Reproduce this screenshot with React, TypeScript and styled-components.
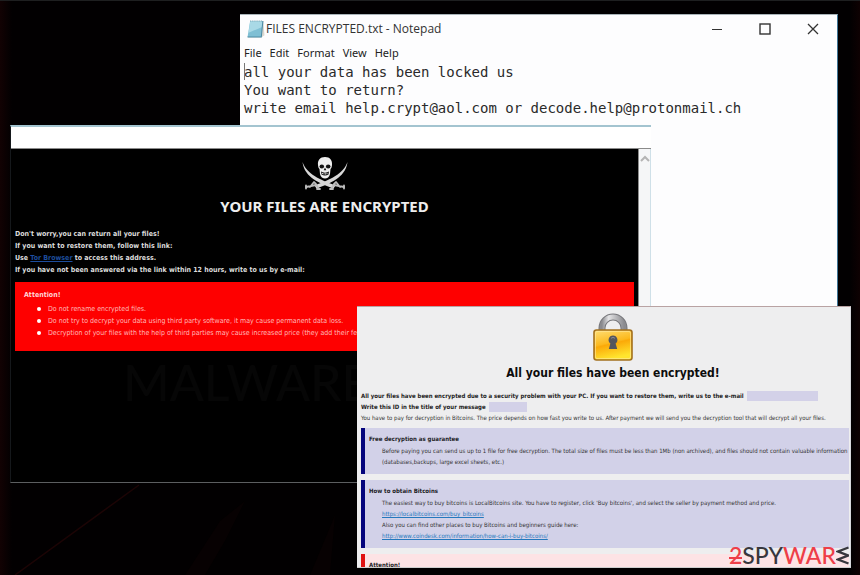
import React from "react";
import styled, { createGlobalStyle } from "styled-components";

const GlobalStyle = createGlobalStyle`
  *, *::before, *::after { box-sizing: border-box; }
  body { margin: 0; background: #020001; }
  h1, h2, h3, p, ul { margin: 0; padding: 0; }
  button { border: 0; padding: 0; background: none; font: inherit; color: inherit; }
`;

const sans = `"DejaVu Sans Condensed", "DejaVu Sans", sans-serif`;

const Desktop = styled.main`
  position: relative;
  min-height: 100vh;
  overflow: hidden;
  border-top: 1px solid #1e1f20;
  background:
    linear-gradient(90deg, #120203 0, transparent 12px),
    linear-gradient(270deg, #0e0102 0, transparent 10px),
    #020001;
`;

const Streaks = styled.svg`
  position: absolute;
  left: 0;
  bottom: 0;
  width: 340px;
  height: 92px;
`;

/* Notepad */

const NotepadWindow = styled.section`
  position: absolute;
  top: 13px;
  left: 240px;
  right: 22px;
  min-height: 300px;
  background: #fdfdfe;
  border-top: 1px solid #a9b4b9;
  border-right: 1px solid #3f7596;
  color: #222;
`;

const TitleBar = styled.header`
  display: flex;
  align-items: center;
  height: 27px;
  padding-left: 7px;
`;

const WindowTitle = styled.h1`
  flex: 1;
  margin-left: 1px;
  font: 400 12px/16px "Open Sans", sans-serif;
  color: #333;
`;

const ControlButton = styled.button`
  display: flex;
  justify-content: center;
  align-items: center;
  width: 48px;
  height: 27px;
`;

const MenuBar = styled.nav`
  display: flex;
  gap: 8px;
  margin-top: 3px;
  padding-left: 4px;
`;

const MenuButton = styled.button`
  font: 400 11px/16px "Noto Sans", sans-serif;
  color: #222;
`;

const NoteText = styled.div`
  margin: 2px 4px;
  font: 14px/18px "DejaVu Sans Mono", monospace;
  color: #2a2a2a;
`;

const Caret = styled.span`
  position: absolute;
  width: 1px;
  height: 17px;
  background: #777;
`;

/* Black ransom note */

const PirateWindow = styled.section`
  position: absolute;
  top: 124px;
  left: 10px;
  right: 209px;
  display: flex;
  flex-direction: column;
  min-height: 358px;
  background: #000;
  border-top: 2px solid #a3c4d0;
  border-left: 1px solid #15181b;
  border-bottom: 1px solid #5c5e60;
`;

const PirateBar = styled.div`
  height: 22px;
  background: #fff;
  border-bottom: 1px solid #8b8b8b;
`;

const PirateFrame = styled.div`
  display: flex;
  flex: 1;
`;

const PirateBody = styled.div`
  position: relative;
  flex: 1;
  padding: 8px 4px 0;
  color: #dcdcdc;
`;

const PirateHeader = styled.header`
  display: flex;
  flex-direction: column;
  align-items: center;
  gap: 5px;
`;

const PirateTitle = styled.h2`
  font: 700 15px/20px "Noto Sans", sans-serif;
  color: #eee;
`;

const PirateIntro = styled.div`
  margin-top: 12px;
  font: 700 7px/12px ${sans};

  a { color: #1d4d9c; }
`;

const RedNotice = styled.div`
  margin-top: 6px;
  padding: 7px 9px 12px;
  background: #fe0000;
  color: #ffb9b9;
  font: 7px/12px ${sans};

  h3 {
    font: inherit;
    font-weight: 700;
    color: #ffd6d6;
    margin-bottom: 2px;
  }
`;

const BulletList = styled.ul`
  list-style: none;

  li {
    display: flex;
    align-items: center;
    gap: 7px;
    padding-left: 13px;
    white-space: nowrap;
    overflow: hidden;
  }
  li::before {
    content: "";
    flex: none;
    width: 4px;
    height: 4px;
    border-radius: 50%;
    background: #fff;
  }
`;

const Watermark = styled.div`
  margin-top: 5px;
  padding-left: 108px;
  font: 500 50px/52px Lato, sans-serif;
  color: #060606;
`;

const ScrollTrack = styled.div`
  width: 13px;
  padding-top: 6px;
  background: #f5f6f7;
  border-left: 1px solid #8d8d8d;
  border-right: 1px solid #cfe0e8;
`;

const ScrollButton = styled.button`
  display: flex;
  justify-content: center;
  width: 100%;
`;

/* Padlock ransom note */

const LockWindow = styled.section`
  position: absolute;
  top: 305px;
  left: 357px;
  right: 9px;
  height: 262px;
  overflow: hidden;
  padding: 6px 1px 0 4px;
  background: #eeeeef;
  border-top: 1px solid #b9a3a3;
  border-right: 1px solid #d8d8dc;
  border-bottom: 1px solid #cfcfcf;
  color: #333;
  font: 6px/11px ${sans};
`;

const LockHeader = styled.header`
  display: flex;
  flex-direction: column;
  align-items: center;
  gap: 4px;
  padding-left: 16px;
`;

const LockTitle = styled.h2`
  font: 700 12px/16px ${sans};
  color: #0c0c0c;
`;

const LockIntro = styled.div`
  margin-top: 9px;
  white-space: nowrap;
`;

const Strong = styled.p`
  display: flex;
  align-items: center;
  gap: 3px;
  font-weight: 700;
  color: #222;
`;

const Redacted = styled.span<{ $width: number }>`
  width: ${(p) => p.$width}px;
  height: 10px;
  background: #d3d1e8;
`;

const Panel = styled.section<{ $tone: "info" | "alert" }>`
  margin: 5px 0 6px;
  padding: 5px 0 7px 4px;
  border-left: 4px solid ${(p) => (p.$tone === "info" ? "#05057c" : "#e01212")};
  background: ${(p) => (p.$tone === "info" ? "#d2d1e8" : "#fde3e5")};
  white-space: nowrap;
  overflow: hidden;

  & + & { margin-top: 0; }

  h3 {
    font: inherit;
    font-weight: 700;
    color: #1d1d26;
    margin-bottom: 1px;
  }
  p { padding-left: 13px; }
  a { color: #2478bd; }
`;

const Brand = styled.footer`
  position: absolute;
  right: 11px;
  bottom: 9px;
  display: flex;
  align-items: center;
  font: 500 23px/22px Lato, sans-serif;
  color: #37373d;
`;

const BrandRed = styled.span`
  color: #ee3e48;
`;

const BrandTwo = styled(BrandRed)`
  position: relative;

  &::after {
    content: "";
    position: absolute;
    left: 0;
    right: 0;
    top: 13px;
    height: 2px;
    background: #ee3e48;
  }
`;

const NotepadIcon = () => (
  <svg width="18" height="18" viewBox="0 0 17 17" aria-hidden="true">
    <path d="M4 1.500 15.500 1 16.500 14.500 13.500 16.500H1z" fill="#d9d7cf" />
    <path d="M3 1h12l-1.500 15H.5z" fill="#7fbfd4" />
    <path d="M3 1h12l-.6 5.500L1.500 12z" fill="#a9d9e6" />
    <path d="M.5 16h13L15 1" fill="none" stroke="#4d8ba5" strokeWidth="1" />
    <path d="M3 1h12" stroke="#6f9bab" strokeDasharray="1 1" />
  </svg>
);

const SkullIcon = () => (
  <svg width="48" height="34" viewBox="0 0 48 34" aria-hidden="true">
    <g fill="#d8d8d8">
      <path d="M1.500 5C5 15 14 21 34.500 28.500L32.500 31.500C14 25 3 18 1.500 5z" />
      <path d="M46.500 5C43 15 34 21 13.500 28.500L15.500 31.500C34 25 45 18 46.500 5z" />
    </g>
    <g stroke="#bdbdbd" strokeWidth="1.800" fill="none" strokeLinecap="round">
      <path d="M34 26c-2 2-2 4-4 6m3-4 10 2M35 25l4 5M14 26c2 2 2 4 4 6m-3-4-10 2M13 25l-4 5" />
      <path d="M43 28.500v3M5 28.500v3M29 32h3M16 32h3" />
    </g>
    <path d="M24 0c-5 0-7.500 3.500-7 8 .2 2 .5 3 1.500 4l.5 5c.5 3 3 4.500 5 4.500s4.500-1.500 5-4.500l.5-5c1-1 1.300-2 1.500-4 .5-4.500-2-8-7-8z" fill="#eee" />
    <g fill="#111">
      <ellipse cx="20.800" cy="9.500" rx="2.300" ry="2" />
      <ellipse cx="27.200" cy="9.500" rx="2.300" ry="2" />
      <path d="m24 10.500 1.300 2.700h-2.600zM20 14.500c2.500 1.500 5.500 1.500 8 0l-.5 3c-2 1.200-5 1.200-7 0z" />
    </g>
    <path d="M21 16.300c2 .8 4 .8 6 0" stroke="#ddd" strokeWidth="1.200" strokeDasharray="1 .5" fill="none" />
  </svg>
);

const LockIcon = () => (
  <svg width="40" height="48" viewBox="0 0 40 48" aria-hidden="true">
    <defs>
      <linearGradient id="lockBody" x1="0" y1="0" x2="0.300" y2="1">
        <stop offset="0" stopColor="#ffdf76" />
        <stop offset=".5" stopColor="#fcb91d" />
        <stop offset=".55" stopColor="#fba908" />
        <stop offset="1" stopColor="#ffe52e" />
      </linearGradient>
      <linearGradient id="lockShackle" x1="0" x2="1">
        <stop offset="0" stopColor="#8b8b8f" />
        <stop offset=".3" stopColor="#e4e4e6" />
        <stop offset="1" stopColor="#8b8b8f" />
      </linearGradient>
    </defs>
    <path d="M9 19v-4a11 11 0 0 1 22 0v4" fill="none" stroke="#77777b" strokeWidth="7" />
    <path d="M9 19v-4a11 11 0 0 1 22 0v4" fill="none" stroke="url(#lockShackle)" strokeWidth="5" />
    <rect x="1" y="17" width="38" height="30" rx="2.500" fill="url(#lockBody)" stroke="#a2701f" strokeWidth="1.600" />
    <rect x="2.500" y="18.500" width="35" height="27" rx="1.500" fill="none" stroke="#ffe9a0" strokeOpacity=".6" />
    <path d="M20 22.500a4.500 4.500 0 0 1 2.600 8.100l.6 2 1 3.400h-8.400l1-3.400.6-2A4.500 4.500 0 0 1 20 22.500z" fill="#55565c" />
    <path d="M18 25.500a2.500 2.500 0 0 1 4 0" stroke="#8d8e94" fill="none" />
  </svg>
);

const menuItems = ["File", "Edit", "Format", "View", "Help"];

export default function App() {
  return (
    <>
      <GlobalStyle />
      <Desktop>
        <Streaks viewBox="0 0 340 92" aria-hidden="true">
          <path d="M15 92 139 2" stroke="#1c0405" strokeWidth="1.500" />
          <path d="m185 92 35-54 25-20-20 40-20 34zM310 92l25-60-5 60z" fill="#070102" />
        </Streaks>

        <NotepadWindow>
          <TitleBar>
            <NotepadIcon />
            <WindowTitle>FILES ENCRYPTED.txt - Notepad</WindowTitle>
            <ControlButton aria-label="Minimize">
              <svg width="12" height="12"><path d="M1 6.500h10" stroke="#333" /></svg>
            </ControlButton>
            <ControlButton aria-label="Maximize">
              <svg width="12" height="12"><rect x="1" y="1" width="10" height="10" fill="none" stroke="#333" strokeWidth="1.400" /></svg>
            </ControlButton>
            <ControlButton aria-label="Close">
              <svg width="12" height="12"><path d="m1 1 10 10M11 1 1 11" stroke="#333" strokeWidth="1.300" /></svg>
            </ControlButton>
          </TitleBar>
          <MenuBar>
            {menuItems.map((item) => (
              <MenuButton key={item}>{item}</MenuButton>
            ))}
          </MenuBar>
          <NoteText>
            <Caret />
            <p>all your data has been locked us</p>
            <p>You want to return?</p>
            <p>write email help.crypt@aol.com or decode.help@protonmail.ch</p>
          </NoteText>
        </NotepadWindow>

        <PirateWindow>
          <PirateBar />
          <PirateFrame>
            <PirateBody>
              <PirateHeader>
                <SkullIcon />
                <PirateTitle>YOUR FILES ARE ENCRYPTED</PirateTitle>
              </PirateHeader>
              <PirateIntro>
                <p>Don't worry,you can return all your files!</p>
                <p>If you want to restore them, follow this link:</p>
                <p>Use <a href="#tor">Tor Browser</a> to access this address.</p>
                <p>If you have not been answered via the link within 12 hours, write to us by e-mail:</p>
              </PirateIntro>
              <RedNotice>
                <h3>Attention!</h3>
                <BulletList>
                  <li>Do not rename encrypted files.</li>
                  <li>Do not try to decrypt your data using third party software, it may cause permanent data loss.</li>
                  <li>Decryption of your files with the help of third parties may cause increased price (they add their fee</li>
                </BulletList>
              </RedNotice>
              <Watermark aria-hidden="true">MALWARE</Watermark>
            </PirateBody>
            <ScrollTrack>
              <ScrollButton aria-label="Scroll up">
                <svg width="10" height="8"><path d="m1 6 4-4 4 4" fill="none" stroke="#b4b4b4" strokeWidth="2" /></svg>
              </ScrollButton>
            </ScrollTrack>
          </PirateFrame>
        </PirateWindow>

        <LockWindow>
          <LockHeader>
            <LockIcon />
            <LockTitle>All your files have been encrypted!</LockTitle>
          </LockHeader>
          <LockIntro>
            <Strong>
              All your files have been encrypted due to a security problem with your PC. If you want to restore them, write us to the e-mail
              <Redacted $width={71} />
            </Strong>
            <Strong>
              Write this ID in the title of your message
              <Redacted $width={38} />
            </Strong>
            <p>You have to pay for decryption in Bitcoins. The price depends on how fast you write to us. After payment we will send you the decryption tool that will decrypt all your files.</p>
          </LockIntro>
          <Panel $tone="info">
            <h3>Free decryption as guarantee</h3>
            <p>Before paying you can send us up to 1 file for free decryption. The total size of files must be less than 1Mb (non archived), and files should not contain valuable information</p>
            <p>(databases,backups, large excel sheets, etc.)</p>
          </Panel>
          <Panel $tone="info">
            <h3>How to obtain Bitcoins</h3>
            <p>The easiest way to buy bitcoins is LocalBitcoins site. You have to register, click 'Buy bitcoins', and select the seller by payment method and price.</p>
            <p><a href="#localbitcoins">https://localbitcoins.com/buy_bitcoins</a></p>
            <p>Also you can find other places to buy Bitcoins and beginners guide here:</p>
            <p><a href="#coindesk">http://www.coindesk.com/information/how-can-i-buy-bitcoins/</a></p>
          </Panel>
          <Panel $tone="alert">
            <h3>Attention!</h3>
          </Panel>
        </LockWindow>

        <Brand>
          <BrandTwo>2</BrandTwo>
          <span>SPY</span>
          <BrandRed>WAR</BrandRed>
          <svg width="13" height="19" viewBox="0 0 13 19" role="img" aria-label="E">
            <path d="M12.500 1.500 2 5.500 12 9.500 2 13.500 12.500 17.500" fill="none" stroke="#37373d" strokeWidth="2.400" />
          </svg>
        </Brand>
      </Desktop>
    </>
  );
}
